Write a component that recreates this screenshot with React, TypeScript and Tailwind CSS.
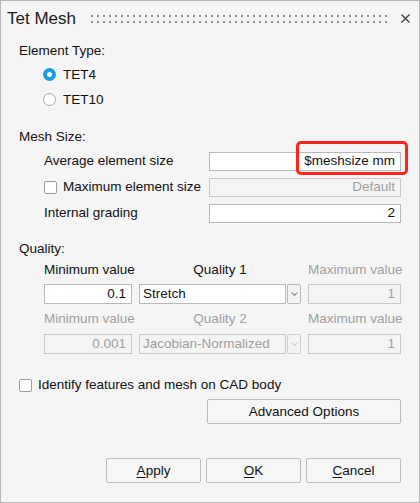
import React from "react";

const font = { fontFamily: '"Liberation Sans", Arial, sans-serif' };

function Radio({ checked, label }: { checked: boolean; label: string }) {
  return (
    <div className="flex h-[25px] items-center pl-[24px]">
      {checked ? (
        <div className="flex h-[13px] w-[13px] items-center justify-center rounded-full bg-[#1a9de0]">
          <div className="h-[5px] w-[5px] rounded-full bg-white" />
        </div>
      ) : (
        <div className="h-[13px] w-[13px] rounded-full border border-[#a8a8a8] bg-white" />
      )}
      <span className="ml-[7px]">{label}</span>
    </div>
  );
}

function Checkbox() {
  return <div className="h-[13px] w-[13px] shrink-0 rounded-[2px] border border-[#9c9c9c] bg-white" />;
}

function Input({ value, disabled }: { value: string; disabled?: boolean }) {
  return (
    <div
      className={
        "flex h-[19px] w-full items-center justify-end border pr-[5px] leading-[16px] " +
        (disabled ? "border-[#c8c8c8] bg-[#f4f4f4] text-[#a0a0a0]" : "border-[#b9b9b9] bg-white text-[#111]")
      }
    >
      {value}
    </div>
  );
}

function Select({ value, disabled }: { value: string; disabled?: boolean }) {
  return (
    <div className="flex h-[20px] w-full">
      <div
        className={
          "flex flex-1 items-center whitespace-nowrap border pl-[3px] leading-[16px] " +
          (disabled ? "border-[#c8c8c8] bg-[#f4f4f4] text-[#a0a0a0]" : "border-[#b9b9b9] bg-white text-[#111]")
        }
      >
        {value}
      </div>
      <div
        className={
          "ml-px flex w-[14px] items-center justify-center rounded-[2px] border bg-[#f4f4f4] " +
          (disabled ? "border-[#d0d0d0]" : "border-[#b9b9b9]")
        }
      >
        <svg width="7" height="5" viewBox="0 0 7 5">
          <path d="M0 0.5 L3.5 4 L7 0.5 L5.8 0.5 L3.5 2.6 L1.2 0.5 Z" fill={disabled ? "#c8c8c8" : "#777"} />
        </svg>
      </div>
    </div>
  );
}

function Button({ children, className = "" }: { children: React.ReactNode; className?: string }) {
  return (
    <div
      className={
        "flex h-[25px] items-center justify-center rounded-[2px] border border-[#bdbdbd] bg-[#f6f6f6] text-[#111] " +
        className
      }
    >
      {children}
    </div>
  );
}

function Box({ value, disabled }: { value: string; disabled?: boolean }) {
  return (
    <div
      className={
        "flex h-[20px] items-center justify-end border pr-[5px] " +
        (disabled ? "border-[#c8c8c8] bg-[#f4f4f4] text-[#a0a0a0]" : "border-[#b9b9b9] bg-white text-[#111]")
      }
    >
      {value}
    </div>
  );
}

export default function App() {
  return (
    <div
      style={font}
      className="relative h-[503px] w-[420px] border border-[#b7b7b7] bg-[#f5f5f5] text-[13.5px] leading-[16px] text-[#111]"
    >
      {/* Title bar */}
      <div className="flex h-[28px] items-start pl-[6px] pr-[9px] pt-[8px]">
        <span className="text-[17px] leading-[20px] text-[#1a1a1a]">Tet Mesh</span>
        <svg className="ml-[15px] mt-[6px] flex-1" height="8" width="296">
          <defs>
            <pattern id="dots" x="0" y="0" width="6" height="6" patternUnits="userSpaceOnUse">
              <rect x="0" y="0" width="2" height="2" fill="#8e8e8e" />
            </pattern>
          </defs>
          <rect x="0" y="0" width="296" height="8" fill="url(#dots)" />
        </svg>
        <svg className="ml-[12px] mt-[5px]" width="9" height="9" viewBox="0 0 9 9">
          <path d="M0.5 0.5 L8.5 8.5 M8.5 0.5 L0.5 8.5" stroke="#3c3c3c" strokeWidth="1.3" />
        </svg>
      </div>

      <div className="px-[18px]">
        {/* Element Type */}
        <div className="mt-[14px]">Element Type:</div>
        <div className="mt-[3px]">
          <Radio checked label="TET4" />
          <Radio checked={false} label="TET10" />
        </div>

        {/* Mesh Size */}
        <div className="mt-[17px]">Mesh Size:</div>
        <div className="mt-[3px] grid grid-cols-[165px_1fr] pl-[25px]">
          <div className="flex h-[26px] items-center">Average element size</div>
          <div className="relative flex h-[26px] items-center">
            <Input value="$meshsize mm" />
            <div className="pointer-events-none absolute left-[87px] top-[-7px] h-[34px] w-[112px] rounded-[5px] border-[3px] border-[#ff2419]" />
          </div>
          <div className="flex h-[26px] items-center">
            <Checkbox />
            <span className="ml-[6px]">Maximum element size</span>
          </div>
          <div className="flex h-[26px] items-center">
            <Input value="Default" disabled />
          </div>
          <div className="flex h-[26px] items-center">Internal grading</div>
          <div className="flex h-[26px] items-center">
            <Input value="2" />
          </div>
        </div>

        {/* Quality */}
        <div className="mt-[15px]">Quality:</div>
        <div className="mt-[5px] grid grid-cols-[88px_162px_93px] gap-x-[7px] whitespace-nowrap pl-[25px]">
          <div>Minimum value</div>
          <div className="text-center">Quality 1</div>
          <div className="text-[#a0a0a0]">Maximum value</div>

          <div className="mt-[6px]">
            <Box value="0.1" />
          </div>
          <div className="mt-[6px]">
            <Select value="Stretch" />
          </div>
          <div className="mt-[6px]">
            <Box value="1" disabled />
          </div>

          <div className="mt-[7px] text-[#a0a0a0]">Minimum value</div>
          <div className="mt-[7px] text-center text-[#a0a0a0]">Quality 2</div>
          <div className="mt-[7px] text-[#a0a0a0]">Maximum value</div>

          <div className="mt-[7px]">
            <Box value="0.001" disabled />
          </div>
          <div className="mt-[7px]">
            <Select value="Jacobian-Normalized" disabled />
          </div>
          <div className="mt-[7px]">
            <Box value="1" disabled />
          </div>
        </div>

        {/* Identify */}
        <div className="mt-[23px] flex h-[16px] items-center">
          <Checkbox />
          <span className="ml-[6px]">Identify features and mesh on CAD body</span>
        </div>

        <div className="mt-[6px] flex justify-end">
          <Button className="w-[194px]">Advanced Options</Button>
        </div>

        <div className="mt-[34px] flex justify-end gap-[5px]">
          <Button className="w-[95px]">
            <span>
              <span className="underline underline-offset-2">A</span>pply
            </span>
          </Button>
          <Button className="w-[95px]">
            <span>
              <span className="underline underline-offset-2">O</span>K
            </span>
          </Button>
          <Button className="w-[95px]">
            <span>
              <span className="underline underline-offset-2">C</span>ancel
            </span>
          </Button>
        </div>
      </div>
    </div>
  );
}
